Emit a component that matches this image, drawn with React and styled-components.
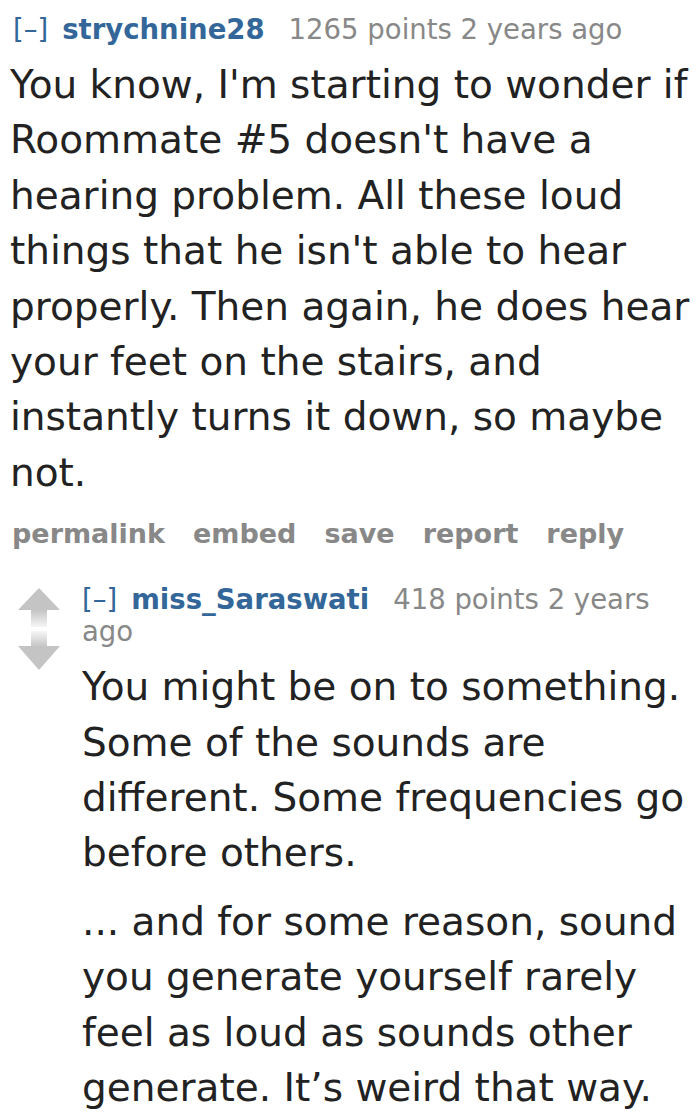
import styled, { createGlobalStyle } from "styled-components";

const GlobalStyle = createGlobalStyle`
  html, body {
    margin: 0;
    padding: 0;
    background: #ffffff;
  }
  body {
    font-family: "DejaVu Sans", Verdana, sans-serif;
  }
`;

const comment = {
  author: "strychnine28",
  points: 1265,
  age: "2 years ago",
  body: [
    "You know, I'm starting to wonder if Roommate #5 doesn't have a hearing problem. All these loud things that he isn't able to hear properly. Then again, he does hear your feet on the stairs, and instantly turns it down, so maybe not.",
  ],
  reply: {
    author: "miss_Saraswati",
    points: 418,
    age: "2 years ago",
    body: [
      "You might be on to something. Some of the sounds are different. Some frequencies go before others.",
      "... and for some reason, sound you generate yourself rarely feel as loud as sounds other generate. It\u2019s weird that way.",
    ],
  },
};

const buttons = ["permalink", "embed", "save", "report", "reply"];

function Arrows() {
  return (
    <ArrowCol>
      <svg width="44" height="84" viewBox="0 0 44 84">
        <defs>
          <linearGradient id="upFade" x1="0" y1="0" x2="0" y2="1">
            <stop offset="0" stopColor="#c4c4c4" />
            <stop offset="1" stopColor="#c4c4c4" stopOpacity="0.15" />
          </linearGradient>
          <linearGradient id="downFade" x1="0" y1="0" x2="0" y2="1">
            <stop offset="0" stopColor="#c4c4c4" stopOpacity="0.15" />
            <stop offset="1" stopColor="#c4c4c4" />
          </linearGradient>
        </defs>
        <polygon points="22,1 43,23 1,23" fill="#c4c4c4" />
        <rect x="14" y="23" width="16" height="17" fill="url(#upFade)" />
        <rect x="14" y="44" width="16" height="16" fill="url(#downFade)" />
        <polygon points="1,59 43,59 22,83" fill="#c4c4c4" />
      </svg>
    </ArrowCol>
  );
}

function Tagline({ author, points, age }) {
  return (
    <Tag>
      <Toggle>[&ndash;]</Toggle>
      <Author>{author}</Author>
      <Meta>
        {points} points {age}
      </Meta>
    </Tag>
  );
}

export default function App() {
  const { reply } = comment;
  return (
    <>
      <GlobalStyle />
      <Page>
        <Tagline {...comment} />
        <Body>
          {comment.body.map((p, i) => (
            <p key={i}>{p}</p>
          ))}
        </Body>
        <Buttons>
          {buttons.map((b) => (
            <li key={b}>{b}</li>
          ))}
        </Buttons>

        <Child>
          <Arrows />
          <ChildEntry>
            <Tagline {...reply} />
            <ChildBody>
              {reply.body.map((p, i) => (
                <p key={i}>{p}</p>
              ))}
            </ChildBody>
          </ChildEntry>
        </Child>
      </Page>
    </>
  );
}

const Page = styled.div`
  width: 700px;
  height: 1120px;
  box-sizing: border-box;
  padding: 13px 2px 0 10px;
  overflow: hidden;
`;

const Tag = styled.div`
  font-size: 27.5px;
  line-height: 32px;
  color: #888888;
  padding-left: 3px;
`;

const Toggle = styled.span`
  color: #369;
  margin-right: 14px;
`;

const Author = styled.span`
  color: #369;
  font-weight: bold;
  margin-right: 24px;
`;

const Meta = styled.span`
  color: #888888;
`;

const Body = styled.div`
  margin-top: 12px;
  font-size: 39px;
  line-height: 55.4px;
  color: #222222;

  p {
    margin: 0;
  }
  p + p {
    margin-top: 13px;
  }
`;

const Buttons = styled.ul`
  list-style: none;
  margin: 18px 0 0 0;
  padding: 0 0 0 2px;
  display: flex;
  gap: 28px;
  font-size: 27px;
  line-height: 32px;
  font-weight: bold;
  color: #888888;
`;

const Child = styled.div`
  margin-top: 33px;
  display: flex;
  align-items: flex-start;
`;

const ArrowCol = styled.div`
  box-sizing: border-box;
  width: 72px;
  padding: 4px 0 0 7px;
  flex-shrink: 0;

  svg {
    display: block;
  }
`;

const ChildEntry = styled.div`
  flex: 1;
  min-width: 0;

  ${Tag} {
    padding-left: 0;
  }
`;

const ChildBody = styled(Body)`
  margin-top: 12px;
`;
